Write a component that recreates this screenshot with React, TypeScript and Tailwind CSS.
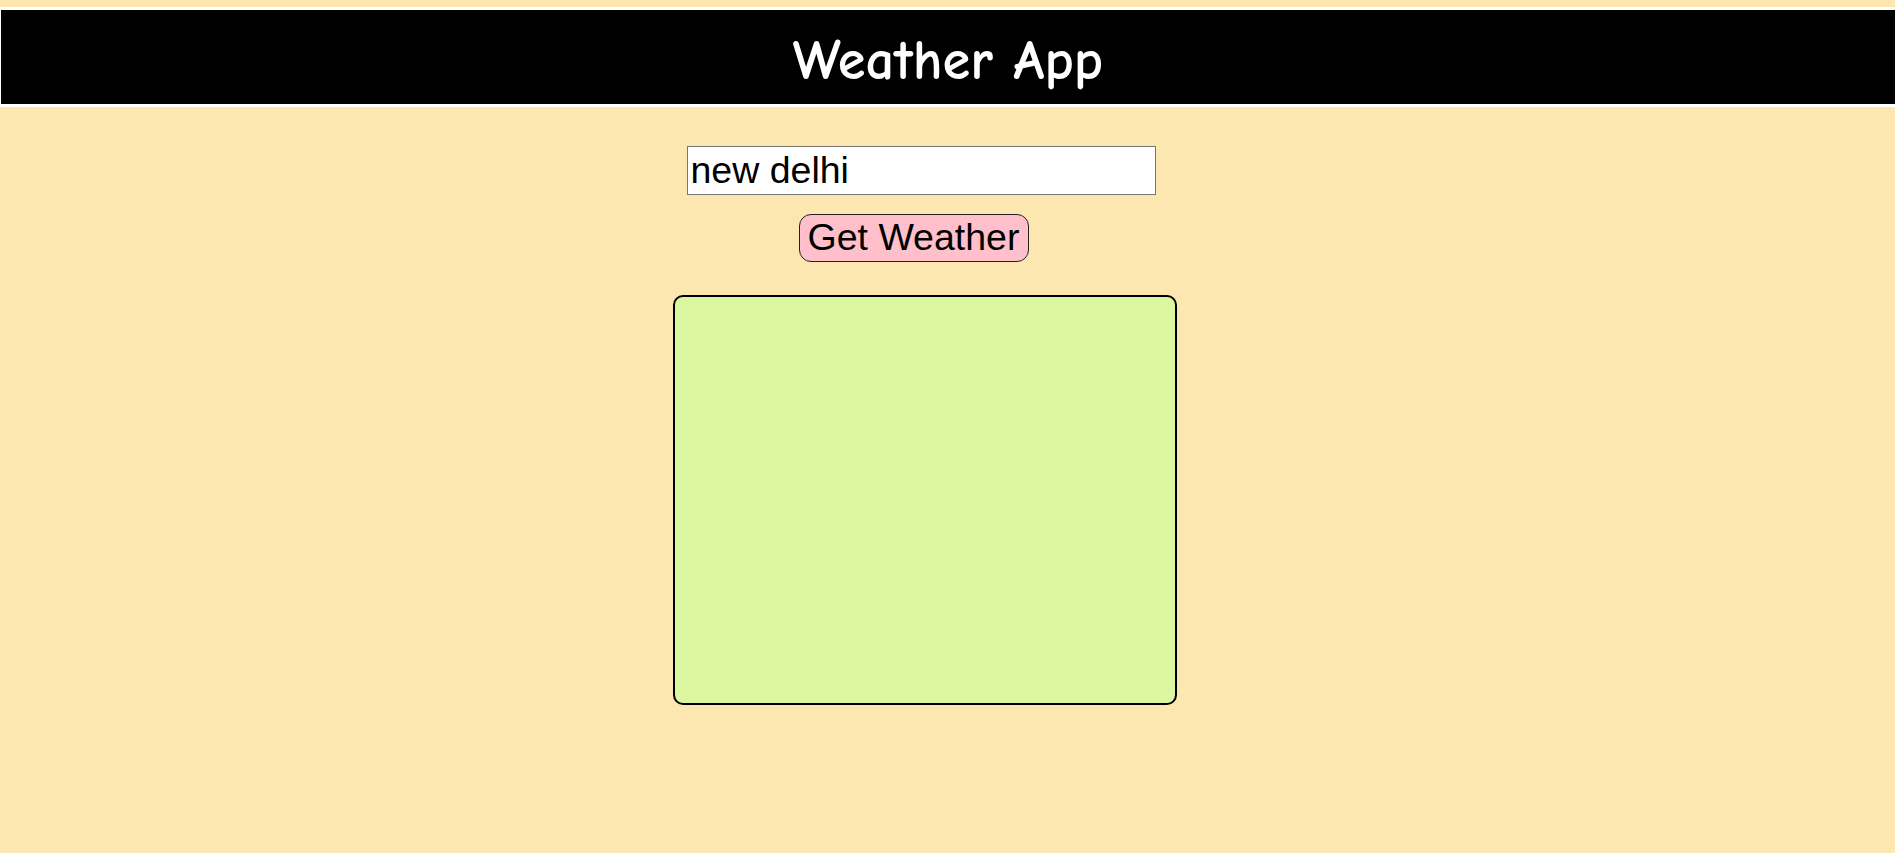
export default function App() {
  return (
    <div className="min-h-[853px] w-full bg-[#fce7b1] pt-[7px] overflow-hidden">
      <div className="h-[100px] w-full border-t-[3px] border-b-[3px] border-l border-white bg-black flex items-center justify-center">
        <h1
          className="text-[56.5px] font-bold leading-none text-white pt-[8px]"
          style={{ fontFamily: '"Comic Sans MS", "Comic Neue", cursive' }}
        >
          Weather App
        </h1>
      </div>
      <div className="flex flex-col items-center" style={{ fontFamily: '"Liberation Sans", Arial, sans-serif' }}>
        <input
          type="text"
          defaultValue="new delhi"
          className="mt-[39px] mr-[53px] h-[49px] w-[469px] border border-[#767676] bg-white px-[3px] text-[37.5px] text-black outline-none"
        />
        <button className="mt-[19px] mr-[68px] h-[48px] w-[230px] rounded-[12px] border border-[#222] bg-[#ffc0cb] text-[37.5px] leading-none text-black">
          Get Weather
        </button>
        <div className="mt-[33px] mr-[45px] h-[410px] w-[504px] rounded-[10px] border-2 border-black bg-[#dbf79f]" />
      </div>
    </div>
  );
}
